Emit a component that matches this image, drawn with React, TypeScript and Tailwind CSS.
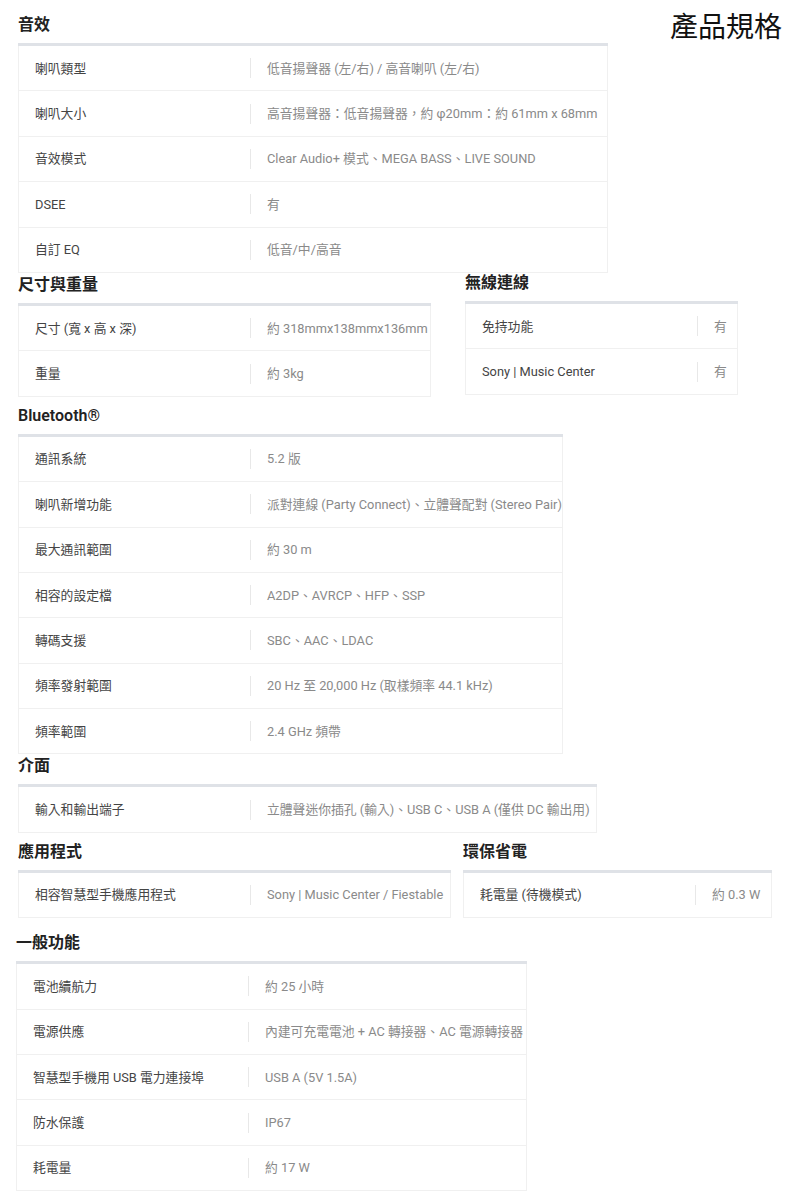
const font = { fontFamily: 'Roboto, "Noto Sans CJK TC", sans-serif' }

type Row = [string, string]

function SpecSection({ title, rows, className }: { title: string; rows: Row[]; className: string }) {
  return (
    <div className={className}>
      <h2 className="h-[24px] leading-[24px] text-[16px] font-semibold text-[#222] mb-[6px]">{title}</h2>
      <div className="h-[3px] bg-[#dfe2e7]" />
      <div>
        {rows.map(([label, value]) => (
          <div
            key={label}
            className="h-[45.4px] flex items-center border-x border-b border-[#f0f0f0] text-[12.8px]"
          >
            <div className="w-[231px] shrink-0 pl-[16px] text-[#444] whitespace-nowrap">{label}</div>
            <div className="w-px h-[20px] bg-[#e8e8e8] shrink-0" />
            <div className="pl-[16px] text-[#8a8a8a] whitespace-nowrap">{value}</div>
          </div>
        ))}
      </div>
    </div>
  )
}

export default function App() {
  return (
    <div className="w-[800px] h-[1200px] bg-white overflow-hidden" style={font}>
      <div className="flex items-start">
        <SpecSection
          title="音效"
          className="ml-[18px] w-[590px] pt-[13px]"
          rows={[
            ["喇叭類型", "低音揚聲器 (左/右) / 高音喇叭 (左/右)"],
            ["喇叭大小", "高音揚聲器：低音揚聲器，約 φ20mm：約 61mm x 68mm"],
            ["音效模式", "Clear Audio+ 模式、MEGA BASS、LIVE SOUND"],
            ["DSEE", "有"],
            ["自訂 EQ", "低音/中/高音"],
          ]}
        />
        <h1 className="ml-auto mr-[18px] mt-[10px] text-[28px] leading-[36px] text-[#111]">產品規格</h1>
      </div>

      <div className="flex items-start">
        <SpecSection
          title="尺寸與重量"
          className="ml-[18px] w-[413px]"
          rows={[
            ["尺寸 (寬 x 高 x 深)", "約 318mmx138mmx136mm"],
            ["重量", "約 3kg"],
          ]}
        />
        <SpecSection
          title="無線連線"
          className="ml-[34px] w-[273px] -mt-[2px]"
          rows={[
            ["免持功能", "有"],
            ["Sony | Music Center", "有"],
          ]}
        />
      </div>

      <SpecSection
        title="Bluetooth®"
        className="ml-[18px] w-[545px] mt-[7px]"
        rows={[
          ["通訊系統", "5.2 版"],
          ["喇叭新增功能", "派對連線 (Party Connect)、立體聲配對 (Stereo Pair)"],
          ["最大通訊範圍", "約 30 m"],
          ["相容的設定檔", "A2DP、AVRCP、HFP、SSP"],
          ["轉碼支援", "SBC、AAC、LDAC"],
          ["頻率發射範圍", "20 Hz 至 20,000 Hz (取樣頻率 44.1 kHz)"],
          ["頻率範圍", "2.4 GHz 頻帶"],
        ]}
      />

      <SpecSection
        title="介面"
        className="ml-[18px] w-[579px]"
        rows={[["輸入和輸出端子", "立體聲迷你插孔 (輸入)、USB C、USB A (僅供 DC 輸出用)"]]}
      />

      <div className="flex items-start mt-[7px]">
        <SpecSection
          title="應用程式"
          className="ml-[18px] w-[433px]"
          rows={[["相容智慧型手機應用程式", "Sony | Music Center / Fiestable"]]}
        />
        <SpecSection
          title="環保省電"
          className="ml-[12px] w-[309px]"
          rows={[["耗電量 (待機模式)", "約 0.3 W"]]}
        />
      </div>

      <SpecSection
        title="一般功能"
        className="ml-[16px] w-[511px] mt-[13px]"
        rows={[
          ["電池續航力", "約 25 小時"],
          ["電源供應", "內建可充電電池 + AC 轉接器、AC 電源轉接器"],
          ["智慧型手機用 USB 電力連接埠", "USB A (5V 1.5A)"],
          ["防水保護", "IP67"],
          ["耗電量", "約 17 W"],
        ]}
      />
    </div>
  )
}
